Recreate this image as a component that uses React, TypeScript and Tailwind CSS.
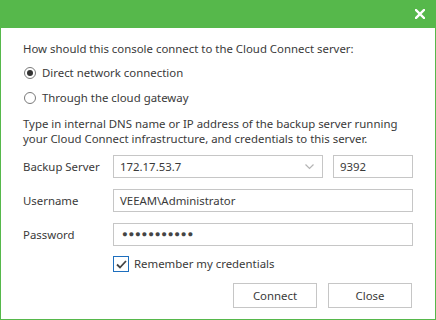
import React from "react";

const Radio = ({ checked, label }: { checked?: boolean; label: string }) => (
  <div className="flex items-center h-[16px]">
    <div className="w-[12px] h-[12px] ml-[1px] rounded-full border border-[#7a7a7a] bg-white flex items-center justify-center">
      {checked && <div className="w-[6px] h-[6px] rounded-full bg-[#333]" />}
    </div>
    <span className="ml-[6px]">{label}</span>
  </div>
);

const Field = ({ children, className = "" }: { children?: React.ReactNode; className?: string }) => (
  <div className={`h-[23px] border border-[#c6c6c6] bg-white flex items-center pl-[6px] ${className}`}>
    {children}
  </div>
);

export default function App() {
  return (
    <div
      className="w-[436px] h-[320px] bg-white border border-[#56b84b] border-t-0 flex flex-col text-[11.4px] text-[#3a3a3a] whitespace-nowrap"
      style={{ fontFamily: '"Noto Sans", "Open Sans", sans-serif' }}
    >
      <div className="h-[28px] -mx-[1px] bg-[#56b84b] flex items-center justify-end pr-[11px] shrink-0">
        <svg width="10" height="10" viewBox="0 0 10 10">
          <path d="M1 1 L9 9 M9 1 L1 9" stroke="white" strokeWidth="2.4" strokeLinecap="square" />
        </svg>
      </div>

      <div className="px-[22px]">
        <p className="mt-[13px] h-[16px] leading-[16px]">
          How should this console connect to the Cloud Connect server:
        </p>
        <div className="mt-[8px]">
          <Radio checked label="Direct network connection" />
        </div>
        <div className="mt-[9px]">
          <Radio label="Through the cloud gateway" />
        </div>
        <p className="mt-[10px] leading-[15px]">
          Type in internal DNS name or IP address of the backup server running
          <br />
          your Cloud Connect infrastructure, and credentials to this server.
        </p>

        <div className="mt-[9px] flex items-center">
          <span className="w-[90px]">Backup Server</span>
          <Field className="w-[210px] justify-between pr-[8px]">
            <span>172.17.53.7</span>
            <svg width="9" height="6" viewBox="0 0 9 6">
              <path d="M0.5 0.5 L4.5 4.5 L8.5 0.5" stroke="#b4b4b4" strokeWidth="1.2" fill="none" />
            </svg>
          </Field>
          <Field className="w-[80px] ml-[10px]">9392</Field>
        </div>

        <div className="mt-[11px] flex items-center">
          <span className="w-[90px]">Username</span>
          <Field className="w-[300px]">VEEAM\Administrator</Field>
        </div>

        <div className="mt-[11px] flex items-center">
          <span className="w-[90px]">Password</span>
          <Field className="w-[300px] pl-[8px]">
            <span className="text-[#444] text-[9.5px] tracking-[0.8px]">●●●●●●●●●●●</span>
          </Field>
        </div>

        <div className="mt-[10px] ml-[90px] flex items-center h-[16px]">
          <div className="w-[16px] h-[16px] border border-[#1e6fbe] flex items-center justify-center">
            <svg width="11" height="9" viewBox="0 0 11 9">
              <path d="M1 4.5 L4 7.5 L10 1" stroke="#444" strokeWidth="1.8" fill="none" />
            </svg>
          </div>
          <span className="ml-[5px]">Remember my credentials</span>
        </div>

        <div className="mt-[11px] flex justify-end gap-[11px] pr-[1px]">
          <button className="w-[84px] h-[25px] border border-[#c6c6c6] bg-white text-[#3a3a3a]">Connect</button>
          <button className="w-[84px] h-[25px] border border-[#c6c6c6] bg-white text-[#3a3a3a]">Close</button>
        </div>
      </div>
    </div>
  );
}
